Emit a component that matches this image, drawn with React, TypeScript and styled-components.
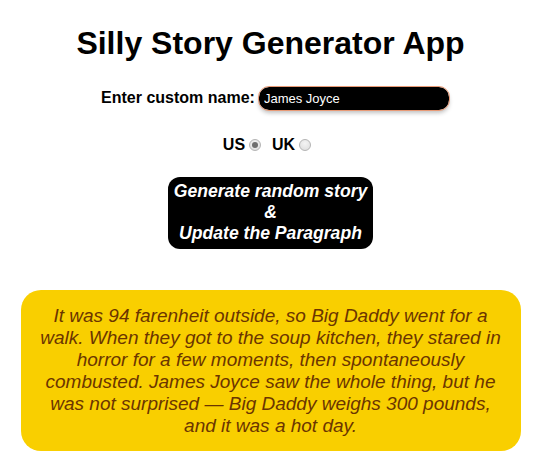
import React, { useState } from "react";
import styled, { createGlobalStyle } from "styled-components";

const Global = createGlobalStyle`
  html, body { margin: 0; padding: 0; background: #ffffff; }
  body { font-family: "Liberation Sans", Arial, sans-serif; }
`;

const Page = styled.main`
  display: flex;
  flex-direction: column;
  align-items: center;
  padding: 20px 20px 0;
`;

const Title = styled.h1`
  margin: 5px 0 0;
  font-size: 32px;
  font-weight: 700;
  color: #000;
  line-height: 1.15;
`;

const NameRow = styled.div`
  margin-top: 25px;
  padding-left: 9px;
  display: flex;
  align-items: center;
  gap: 4px;
`;

const Label = styled.label`
  font-size: 16px;
  font-weight: 700;
  color: #000;
`;

const NameInput = styled.input`
  width: 190px;
  height: 23px;
  box-sizing: border-box;
  background: #000;
  color: #fff;
  border: none;
  border-radius: 10px;
  padding: 0 5px;
  font-family: "Liberation Sans", Arial, sans-serif;
  font-size: 13px;
  outline: 1px solid #e89a76;
  outline-offset: 0px;
  box-shadow: 0 3px 4px rgba(0, 0, 0, 0.25);
`;

const RadioRow = styled.div`
  margin-top: 26px;
  padding-right: 7px;
  display: flex;
  align-items: center;
  gap: 11px;
`;

const RadioLabel = styled.label`
  display: flex;
  align-items: center;
  gap: 4px;
  font-size: 16px;
  font-weight: 700;
  color: #000;
`;

const Radio = styled.input`
  appearance: none;
  -webkit-appearance: none;
  margin: 0;
  width: 12px;
  height: 12px;
  box-sizing: border-box;
  border-radius: 50%;
  border: 1px solid #b4b4b4;
  background: radial-gradient(circle at 50% 35%, #f4f4f4 0%, #dcdcdc 100%);
  display: grid;
  place-items: center;
  &:checked::after {
    content: "";
    width: 6px;
    height: 6px;
    border-radius: 50%;
    background: #6e6e6e;
  }
`;

const GenerateButton = styled.button`
  margin-top: 23px;
  background: #000;
  color: #fff;
  border: none;
  border-radius: 12px;
  padding: 4px 6px 5px;
  font-family: "Liberation Sans", Arial, sans-serif;
  font-size: 17.6px;
  font-weight: 700;
  font-style: italic;
  line-height: 21px;
  cursor: pointer;
`;

const Story = styled.p`
  margin: 41px 0 0;
  width: 500px;
  box-sizing: border-box;
  background: #f9cf00;
  color: #6b3500;
  border-radius: 20px;
  padding: 15px 14px 14px;
  font-size: 19px;
  font-style: italic;
  text-align: center;
  line-height: 22px;
`;

export default function App() {
  const [country, setCountry] = useState("us");
  return (
    <>
      <Global />
      <Page>
        <Title>Silly Story Generator App</Title>
        <NameRow>
          <Label htmlFor="customname">Enter custom name:</Label>
          <NameInput id="customname" type="text" defaultValue="James Joyce" />
        </NameRow>
        <RadioRow>
          <RadioLabel>
            US
            <Radio type="radio" name="ukus" checked={country === "us"} onChange={() => setCountry("us")} />
          </RadioLabel>
          <RadioLabel>
            UK
            <Radio type="radio" name="ukus" checked={country === "uk"} onChange={() => setCountry("uk")} />
          </RadioLabel>
        </RadioRow>
        <GenerateButton>
          Generate random story
          <br />&amp;<br />
          Update the Paragraph
        </GenerateButton>
        <Story>
          It was 94 farenheit outside, so Big Daddy went for a walk. When they got to the soup kitchen, they stared in horror for a few moments, then spontaneously combusted. James Joyce saw the whole thing, but he was not surprised — Big Daddy weighs 300 pounds, and it was a hot day.
        </Story>
      </Page>
    </>
  );
}
